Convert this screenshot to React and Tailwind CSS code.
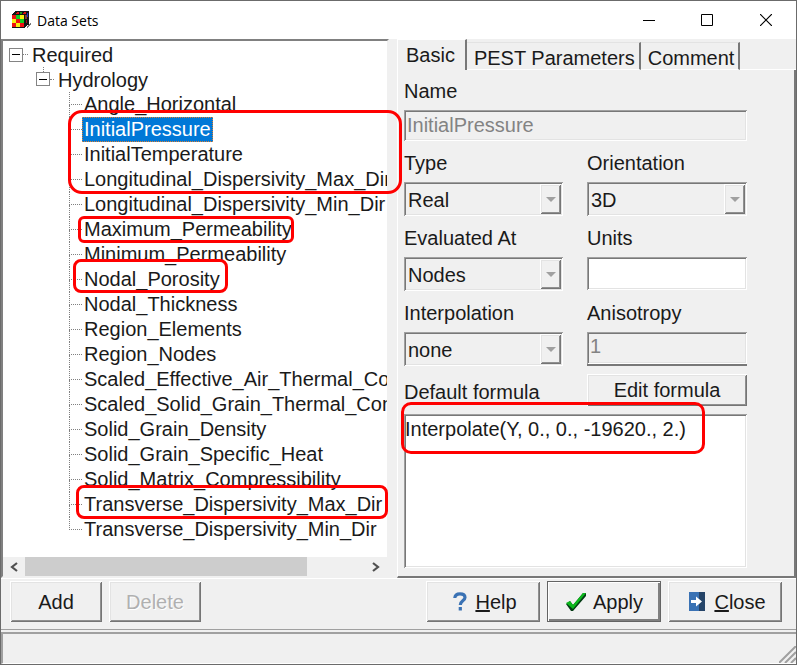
import React from "react";

const SUNKEN =
  "shadow-[inset_1px_1px_#a0a0a0,inset_-1px_-1px_#ffffff,inset_2px_2px_#787878,inset_-2px_-2px_#e3e3e3]";
const RAISED =
  "shadow-[inset_1px_1px_#ffffff,inset_-1px_-1px_#757575,inset_2px_2px_#e3e3e3,inset_-2px_-2px_#909090]";

const DATA_SETS = [
  "Angle_Horizontal",
  "InitialPressure",
  "InitialTemperature",
  "Longitudinal_Dispersivity_Max_Dir",
  "Longitudinal_Dispersivity_Min_Dir",
  "Maximum_Permeability",
  "Minimum_Permeability",
  "Nodal_Porosity",
  "Nodal_Thickness",
  "Region_Elements",
  "Region_Nodes",
  "Scaled_Effective_Air_Thermal_Conductivity",
  "Scaled_Solid_Grain_Thermal_Conductivity",
  "Solid_Grain_Density",
  "Solid_Grain_Specific_Heat",
  "Solid_Matrix_Compressibility",
  "Transverse_Dispersivity_Max_Dir",
  "Transverse_Dispersivity_Min_Dir",
];

function AppIcon() {
  return (
    <svg width="20" height="18" viewBox="0 0 20 18" shapeRendering="crispEdges" aria-hidden="true">
      <path d="M3 0h14v14h-2l-2 3H0V4z" fill="#151515" />
      <path d="M5 1h2v2H4zM12 1h2v2h-3z" fill="#e01010" />
      <path d="M8 1h2v2H8z" fill="#1a9a1a" />
      <path d="M0 4h12v12H0z" fill="#f01010" />
      <path d="M4 4h4v4H4zM8 8h4v4H8z" fill="#10d020" />
      <path d="M0 8h4v4H0zM4 12h4v4H4zM8 4h4v4H8z" fill="#f8f010" />
      <path d="M13 4h2v4h-2z" fill="#804030" />
      <path d="M15 2h1v4h-1z" fill="#2030c0" />
      <path d="M14 9h1v3h-1z" fill="#a01020" />
      <path d="M14 16l4-4h1v2l-4 3z" fill="#777" />
    </svg>
  );
}

function TitleBar() {
  return (
    <header className="flex h-[38px] items-center bg-white pl-[11px] font-['Open_Sans',sans-serif] text-[14px] text-black">
      <AppIcon />
      <h1 className="ml-[5px] flex-1">Data Sets</h1>
      <button aria-label="Minimize" className="flex h-full w-[58px] items-center justify-center">
        <svg width="12" height="12" stroke="#000" shapeRendering="crispEdges"><path d="M0 6.500h12" /></svg>
      </button>
      <button aria-label="Maximize" className="flex h-full w-[58px] items-center justify-center">
        <svg width="12" height="12" fill="none" stroke="#000"><path d="M.5.5h11v11H.5z" /></svg>
      </button>
      <button aria-label="Close window" className="flex h-full w-[60px] items-center justify-center">
        <svg width="12" height="12" stroke="#000" strokeWidth="1.200"><path d="M0 0l12 12M12 0L0 12" /></svg>
      </button>
    </header>
  );
}

function Toggle() {
  return (
    <button aria-label="Collapse" className="flex size-[14px] items-center justify-center border border-[#848484] bg-white">
      <span className="h-px w-2 bg-black" />
    </button>
  );
}

function Mark({ className }) {
  return <span aria-hidden="true" className={`pointer-events-none absolute z-10 border-[3px] border-[#f00] ${className}`} />;
}

function Tree() {
  return (
    <div className="relative flex min-w-0 flex-1 flex-col border-2 border-t-[#808080] border-r-[#f0f0f0] border-b-[#f0f0f0] border-l-[#808080] bg-white">
      <div className="flex-1 overflow-hidden pt-px whitespace-nowrap">
        <div className="flex h-[25px] items-center pl-[6px]">
          <Toggle />
          <span className="mr-1 w-[5px] border-t border-dotted border-[#808080]" />
          Required
        </div>
        <div className="flex h-[25px] items-center pl-[33px]">
          <span className="flex h-full flex-col items-center">
            <span className="h-[5px] border-l border-dotted border-[#808080]" />
            <Toggle />
          </span>
          <span className="mr-1 w-1 border-t border-dotted border-[#808080]" />
          Hydrology
        </div>
        <ul className="ml-[66px]">
          {DATA_SETS.map((name, i) => (
            <li key={name} className="flex h-[25px]">
              <span className="flex w-[13px] shrink-0 flex-col">
                <span className="h-[13px] w-full border-b border-l border-dotted border-[#808080]" />
                {i < DATA_SETS.length - 1 && <span className="flex-1 border-l border-dotted border-[#808080]" />}
              </span>
              <button
                className={
                  i === 1
                    ? "border border-dotted border-[#e08030] bg-[#0078d7] px-px leading-[23px] text-white"
                    : "border border-transparent px-px leading-[23px]"
                }
              >
                {name}
              </button>
            </li>
          ))}
        </ul>
      </div>
      <div className="flex h-[19px] bg-[#f0f0f0]">
        <button aria-label="Scroll left" className="flex w-[22px] items-center justify-center">
          <svg width="8" height="10" fill="none" stroke="#505050" strokeWidth="2.200"><path d="M7 1L2 5l5 4" /></svg>
        </button>
        <div className="flex flex-1"><div className="w-[83%] bg-[#cdcdcd]" /></div>
        <button aria-label="Scroll right" className="flex w-[22px] items-center justify-center">
          <svg width="8" height="10" fill="none" stroke="#505050" strokeWidth="2.200"><path d="M1 1l5 4-5 4" /></svg>
        </button>
      </div>
      <Mark className="top-[69px] left-[65px] h-[84px] w-[334px] rounded-[14px]" />
      <Mark className="top-[175px] left-[75px] h-[27px] w-[216px] rounded-[6px]" />
      <Mark className="top-[218px] left-[70px] h-[34px] w-[155px] rounded-[8px]" />
      <Mark className="top-[444px] left-[73px] h-[34px] w-[312px] rounded-[8px]" />
    </div>
  );
}

function Field({ id, label, className = "", children }) {
  return (
    <div className={`flex flex-col gap-[5px] ${className}`}>
      <label htmlFor={id} className="leading-7">{label}</label>
      {children}
    </div>
  );
}

function Combo({ id, label, value }) {
  return (
    <Field id={id} label={label}>
      <div className={`relative flex h-[34px] p-[2px] ${SUNKEN}`}>
        <select id={id} className="w-full appearance-none bg-transparent pt-px pl-[2px] outline-none">
          <option>{value}</option>
        </select>
        <span className={`pointer-events-none absolute inset-y-[2px] right-[2px] flex w-[21px] items-center justify-center bg-[#f0f0f0] ${RAISED}`}>
          <svg width="10" height="5" fill="#a0a0a0"><path d="M0 0h10L5 5z" /></svg>
        </span>
      </div>
    </Field>
  );
}

function Tab({ children, active }) {
  return (
    <button
      role="tab"
      aria-selected={!!active}
      className={
        active
          ? "h-[31px] border-t border-r-2 border-l border-t-white border-r-[#787878] border-l-white pr-[10px] pb-[3px] pl-2"
          : "h-[28px] border-t border-r-2 border-b border-t-[#e3e3e3] border-r-[#787878] border-b-white pr-1 pb-1 pl-[7px]"
      }
    >
      {children}
    </button>
  );
}

function Details() {
  return (
    <div className="flex w-[399px] flex-col">
      <div role="tablist" className="flex items-end">
        <Tab active>Basic</Tab>
        <Tab>PEST Parameters</Tab>
        <Tab>Comment</Tab>
        <span className="flex-1 border-b border-white" />
      </div>
      <div className="flex flex-1 flex-col border-r-2 border-b-2 border-l border-r-[#787878] border-b-[#787878] border-l-white pt-[7px] pr-[47px] pb-2 pl-[6px]">
        <div className="grid grid-cols-[159px_160px] justify-between gap-y-2">
          <Field id="name" label="Name" className="col-span-2">
            <input id="name" readOnly value="InitialPressure" className={`h-[31px] w-full px-[3px] text-[#838383] outline-none ${SUNKEN}`} />
          </Field>
          <Combo id="type" label="Type" value="Real" />
          <Combo id="orientation" label="Orientation" value="3D" />
          <Combo id="evaluated" label="Evaluated At" value="Nodes" />
          <Field id="units" label="Units">
            <input id="units" className={`h-[33px] w-full bg-white px-[3px] outline-none ${SUNKEN}`} />
          </Field>
          <Combo id="interpolation" label="Interpolation" value="none" />
          <Field id="anisotropy" label="Anisotropy">
            <div className="border-b-2 border-[#787878]">
              <input id="anisotropy" readOnly value="1" className={`block h-[32px] w-full px-[3px] pb-1 text-[#838383] outline-none ${SUNKEN}`} />
            </div>
          </Field>
          <label htmlFor="formula" className="self-end leading-7">Default formula</label>
          <button className={`h-8 ${RAISED}`}>Edit formula</button>
        </div>
        <div className="relative mt-2 flex flex-1">
          <textarea
            id="formula"
            defaultValue="Interpolate(Y, 0., 0., -19620., 2.)"
            className={`w-full resize-none overflow-hidden bg-white px-px pt-[3px] leading-6 outline-none ${SUNKEN}`}
          />
          <Mark className="-top-[12px] -left-[3px] h-[52px] w-[304px] rounded-[10px]" />
        </div>
      </div>
    </div>
  );
}

function HelpIcon() {
  return (
    <svg width="14" height="19" viewBox="0 0 14 19" fill="none" stroke="#3a72b4" strokeWidth="3.200" aria-hidden="true">
      <path d="M1.800 6C2 3 4 1.800 7 1.800S12 3 12 5.500C12 8.500 7.300 8.500 7.300 13" />
      <path d="M7.300 15v3.500" />
    </svg>
  );
}

function CheckIcon() {
  return (
    <svg width="22" height="20" viewBox="0 0 22 20" aria-hidden="true">
      <path d="M1 12l4-3 3 4L18 1h3v3L8 19H6z" fill="#043a14" />
      <path d="M1 11l4-2 3 4L18 1h3L8 17z" fill="#0cb81c" />
    </svg>
  );
}

function CloseIcon() {
  return (
    <svg width="18" height="21" viewBox="0 0 18 21" aria-hidden="true">
      <path d="M1 1h10v19H1z" fill="#3a72b4" />
      <path d="M11 1h6v19h-6z" fill="#254468" />
      <path d="M3 9h5V5.500L14 10.500 8 15.500V12H3z" fill="#fff" />
    </svg>
  );
}

function Footer() {
  const wide = "flex h-[41px] w-[114px] items-center justify-center gap-2 pl-1";
  return (
    <>
      <div className="flex h-[52px] items-start gap-[7px] border-t border-b border-t-white border-b-[#a0a0a0] pt-[2px] pr-[14px] pl-[9px]">
        <button className={`h-[41px] w-[92px] ${RAISED}`}>Add</button>
        <button disabled className={`h-[41px] w-[92px] text-[#b0b0b0] [text-shadow:1px_1px_#fff] ${RAISED}`}>Delete</button>
        <span className="flex-1" />
        <button className={`${wide} ${RAISED}`}><HelpIcon /><span><u>H</u>elp</span></button>
        <button className="flex h-[41px] w-[114px] items-center justify-center gap-[6px] border border-[#646464] shadow-[inset_1px_1px_#ffffff,inset_-2px_-2px_#808080]">
          <CheckIcon />Apply
        </button>
        <button className={`${wide} ${RAISED}`}><CloseIcon /><span><u>C</u>lose</span></button>
      </div>
      <div className="mt-[2px] flex h-[32px] items-end justify-end border-t-2 border-b border-l-2 border-[#a0a0a0] border-b-white">
        <svg width="17" height="17" stroke="#a0a0a0" strokeWidth="2" aria-hidden="true">
          <path d="M0 17L17 0M6 17L17 6M12 17l5-5" />
        </svg>
      </div>
    </>
  );
}

export default function App() {
  return (
    <main className="flex min-h-screen flex-col border border-[#6b6b6b] bg-[#f0f0f0] font-['Liberation_Sans',Arial,sans-serif] text-[20px] text-[#1a1a1a]">
      <TitleBar />
      <div className="flex flex-1 gap-2">
        <Tree />
        <Details />
      </div>
      <Footer />
    </main>
  );
}
